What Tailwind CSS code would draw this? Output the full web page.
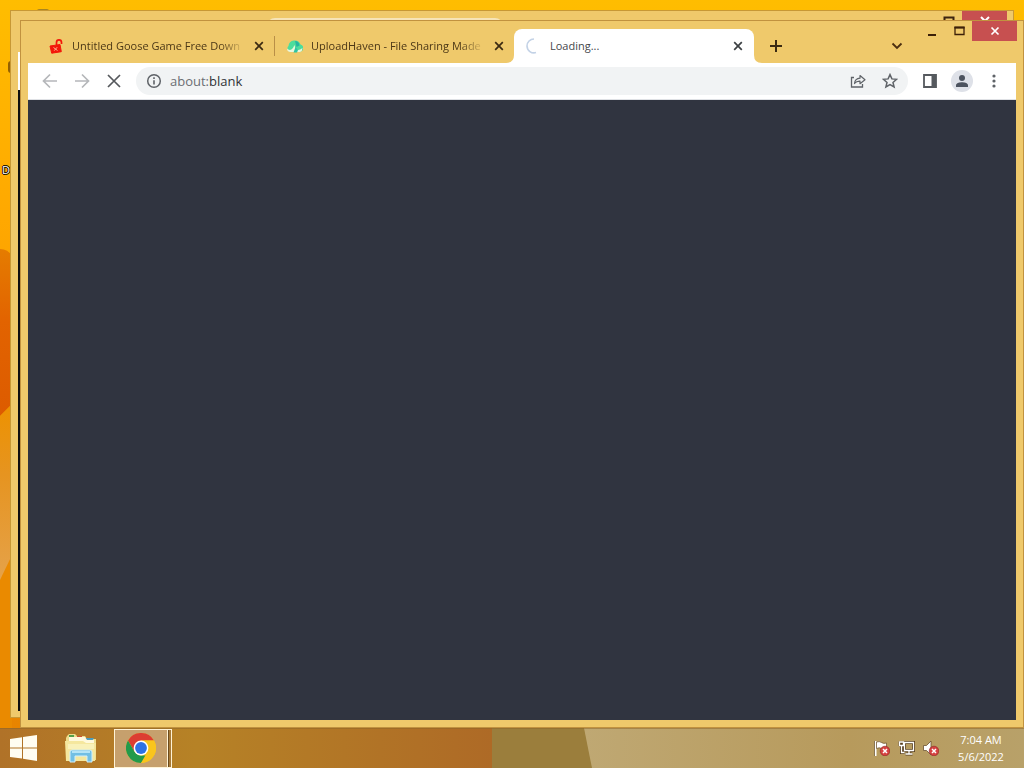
<!DOCTYPE html>
<html lang="en">
<head>
<meta charset="utf-8">
<title>Desktop</title>
<script src="https://cdn.jsdelivr.net/npm/@tailwindcss/browser@4"></script>
</head>
<body class="h-screen overflow-hidden flex flex-col font-['Open_Sans','Noto_Sans',sans-serif] text-[#202124]">

<main class="relative flex-1 bg-linear-to-b from-[#ffbd00] via-[#ffa800] via-30% to-[#e88400]">
  <!-- wallpaper -->
  <svg class="absolute left-0 top-0 h-full w-5" viewBox="0 0 20 728" preserveAspectRatio="none" aria-hidden="true">
    <defs>
      <linearGradient id="w1" x1="0" y1="0" x2="0" y2="1"><stop offset="0" stop-color="#e57c00"/><stop offset=".4" stop-color="#e26300"/><stop offset="1" stop-color="#dc5a00"/></linearGradient>
      <linearGradient id="w2" x1="0" y1="0" x2="0" y2="1"><stop offset="0" stop-color="#ed9200"/><stop offset=".4" stop-color="#e69420"/><stop offset="1" stop-color="#e5a24a"/></linearGradient>
    </defs>
    <path d="M0 249Q8 249 12 256V430H0z" fill="url(#w1)"/>
    <path d="M0 416L12 404V728H0z" fill="#ea8a00"/>
    <path d="M0 416L12 404V555L0 580z" fill="url(#w2)"/>
  </svg>
  <span class="absolute left-0.5 top-[162px] text-[11px] leading-4 text-white [text-shadow:1px_0_#000,-1px_0_#000,0_1px_#000,0_-1px_#000]">D</span>
  <span class="absolute left-[37px] top-[9px] h-[2px] w-3 rounded-t-full bg-[#a88520]"></span>
  <span class="absolute left-2 top-[61px] h-3 w-[3px] rounded-l-full bg-[#946000]"></span>

  <!-- window behind -->
  <section aria-label="Background window" class="absolute left-[10px] top-[10px] right-[10px] bottom-[10px] flex flex-col border border-[#c79835] bg-[#efc96b]">
    <header class="flex h-[41px] shrink-0 items-start">
      <div class="ml-[256px] mt-[7px] h-8 w-[236px] rounded-t-lg bg-[#f6e4b8]"></div>
      <svg class="ml-auto mt-[5px] mr-[7px]" width="12" height="10" viewBox="0 0 12 10"><path d="M1.500 1.500h9v7h-9z" fill="none" stroke="#3c2410" stroke-width="2"/></svg>
      <div class="mr-1.5 flex h-5 w-[45px] items-center justify-center bg-[#c75050]"><svg width="10" height="10" viewBox="0 0 10 10"><path d="M1 1l8 8M9 1l-8 8" stroke="#fff" stroke-width="2"/></svg></div>
    </header>
    <div class="mx-[7px] h-[38px] shrink-0 bg-white"></div>
    <div class="mx-[7px] mb-[6px] flex-1 bg-[#0d0e10]"></div>
  </section>

  <!-- browser window -->
  <section aria-label="Browser" class="absolute left-[20px] top-[20px] right-0 bottom-0 flex flex-col border border-[#c1923f] bg-[#efc96b]">
    <header class="flex h-[42px] shrink-0 items-end pl-[15px]">
      <div class="flex items-end" role="tablist">
        <div class="flex h-[34px] w-[239px] items-center pl-3">
          <svg width="16" height="16" viewBox="0 0 16 16" class="shrink-0"><path d="M2 8l10-1.500 1.300 7.200-9.600 1.500z" fill="#f3170a" stroke="#f3170a" stroke-linejoin="round"/><path d="M8.500 7V4.500C8.500 1 13.500 1 13.500 4.500V6" fill="none" stroke="#f3170a" stroke-width="1.700"/><path d="M5.500 9.500l4 3M9.200 9.200l-3 3.500" stroke="#ffb28c"/></svg>
          <button role="tab" class="ml-2 w-[174px] whitespace-nowrap text-left text-[11px] leading-4 text-[#4b3716] mask-r-from-85% mask-r-to-100%">Untitled Goose Game Free Down</button>
          <button aria-label="Close tab" class="ml-1.5"><svg width="16" height="16" viewBox="0 0 16 16"><path d="M4.200 4.200l7.600 7.600M11.800 4.200l-7.600 7.600" stroke="#3b2a12" stroke-width="1.700"/></svg></button>
          <span class="ml-[7px] h-5 w-px bg-[#b98f47]"></span>
        </div>
        <div class="flex h-[34px] w-[239px] items-center pl-3">
          <svg width="16" height="16" viewBox="0 0 16 16" class="shrink-0"><path d="M3 13.500a3.200 3.200 0 0 1-1.500-5.500A6.200 6.200 0 0 1 13.500 6.500 3.700 3.700 0 0 1 14 13.500z" fill="#4cdd9c"/><path d="M0 10.500q3 3 6-.500l1.500-3 1 4q3 2.500 7-1 0 3-2.500 4H3q-3-.500-3-3.500z" fill="#e9f7dc"/><path d="M6.500 14.500l2-5.500 2.500 3-1 2.500z" fill="#2fc4a3"/><path d="M8 3q4 0 4.500 4.500L9.500 9z" fill="#28b5a0"/></svg>
          <button role="tab" class="ml-2 w-[174px] whitespace-nowrap text-left text-[11px] leading-4 text-[#4b3716] mask-r-from-85% mask-r-to-100%">UploadHaven - File Sharing Made</button>
          <button aria-label="Close tab" class="ml-1.5"><svg width="16" height="16" viewBox="0 0 16 16"><path d="M4.200 4.200l7.600 7.600M11.800 4.200l-7.600 7.600" stroke="#3b2a12" stroke-width="1.700"/></svg></button>
        </div>
        <div class="relative flex h-[34px] w-[240px] items-center rounded-t-lg bg-white pl-3">
          <svg class="absolute -left-2 bottom-0" width="8" height="8" viewBox="0 0 8 8"><path d="M8 0v8H0Q8 8 8 0z" fill="#fff"/></svg>
          <svg class="absolute -right-2 bottom-0" width="8" height="8" viewBox="0 0 8 8"><path d="M0 0v8h8Q0 8 0 0z" fill="#fff"/></svg>
          <svg width="16" height="16" viewBox="0 0 16 16" class="shrink-0"><path d="M8 1A7 7 0 0 0 1 8 7 7 0 0 0 10 14.600" fill="none" stroke="#c3d2e6" stroke-width="1.600"/></svg>
          <button role="tab" aria-selected="true" class="ml-2 w-[174px] text-left text-[11px] leading-4 text-[#45474b]">Loading...</button>
          <button aria-label="Close tab" class="ml-1.5"><svg width="16" height="16" viewBox="0 0 16 16"><path d="M4.200 4.200l7.600 7.600M11.800 4.200l-7.600 7.600" stroke="#3c4043" stroke-width="1.700"/></svg></button>
        </div>
      </div>
      <button aria-label="New tab" class="mb-[9px] ml-[14px]"><svg width="16" height="16" viewBox="0 0 16 16"><path d="M8 2v12M2 8h12" stroke="#3b2a12" stroke-width="2"/></svg></button>
      <button aria-label="Search tabs" class="mb-[9px] ml-auto mr-[23px]"><svg width="16" height="16" viewBox="0 0 16 16"><path d="M3.500 5.500L8 10l4.500-4.500" fill="none" stroke="#4b2e10" stroke-width="1.800"/></svg></button>
      <div class="flex h-5 items-center self-start">
        <button aria-label="Minimize" class="w-[9px]"><svg width="9" height="12" viewBox="0 0 9 12"><path d="M0 10h8" stroke="#3c2008" stroke-width="2"/></svg></button>
        <button aria-label="Maximize" class="ml-[17px] mr-[7px]"><svg width="11" height="12" viewBox="0 0 11 12"><path d="M1 2.500h9v7H1z" fill="none" stroke="#3c2008" stroke-width="1.300"/><path d="M.400 2.500h10.200" stroke="#3c2008" stroke-width="2"/></svg></button>
        <button aria-label="Close" class="mr-1.5 flex h-5 w-[45px] items-center justify-center bg-[#c75050]"><svg width="10" height="10" viewBox="0 0 10 10"><path d="M1.500 1.500l7 7M8.500 1.500l-7 7" stroke="#fff" stroke-width="1.700"/></svg></button>
      </div>
    </header>

    <div class="mr-[7px] ml-[7px] flex h-[37px] shrink-0 items-center border-b border-[#dfe1e5] bg-white px-[14px]">
      <button aria-label="Back"><svg width="16" height="16" viewBox="0 0 16 16"><path d="M15 8H2M8 1.500L1.500 8 8 14.500" fill="none" stroke="#b5b7ba" stroke-width="1.700"/></svg></button>
      <button aria-label="Forward" class="ml-4"><svg width="16" height="16" viewBox="0 0 16 16"><path d="M1 8h13M8 1.500L14.500 8 8 14.500" fill="none" stroke="#b5b7ba" stroke-width="1.700"/></svg></button>
      <button aria-label="Stop" class="ml-4"><svg width="16" height="16" viewBox="0 0 16 16"><path d="M2 2l12 12M14 2L2 14" stroke="#55585c" stroke-width="1.700"/></svg></button>
      <div class="ml-[14px] flex h-7 flex-1 items-center rounded-full bg-[#f1f3f4] px-[10px]">
        <button aria-label="Site information"><svg width="16" height="16" viewBox="0 0 16 16"><circle cx="8" cy="8" r="6.300" fill="none" stroke="#5f6368" stroke-width="1.500"/><path d="M8 7.200v4.200M8 4.300v1.700" stroke="#5f6368" stroke-width="1.600"/></svg></button>
        <div class="relative ml-2 flex-1 text-[13px] leading-5">
          <input aria-label="Address" value="about:blank" class="w-full bg-transparent text-transparent outline-none">
          <span aria-hidden="true" class="pointer-events-none absolute left-0 top-0 text-[#303236]"><span class="text-[#6b6e73]">about:</span>blank</span>
        </div>
        <button aria-label="Share"><svg width="16" height="16" viewBox="0 0 16 16"><path d="M4 4.500H1.500V14h11v-3" fill="none" stroke="#5f6368" stroke-width="1.300"/><path d="M4.500 10.500Q5 5.500 10 5.200V2.500L15 6.700l-5 4V8.200Q6.500 8 4.500 10.500z" fill="none" stroke="#5f6368" stroke-width="1.200" stroke-linejoin="round"/></svg></button>
        <button aria-label="Bookmark" class="ml-4"><svg width="16" height="16" viewBox="0 0 16 16"><path d="M8 1.600l1.900 4.300 4.700.4-3.600 3.100 1.100 4.600L8 11.600 3.900 14 5 9.400 1.400 6.300l4.700-.4z" fill="none" stroke="#5f6368" stroke-width="1.500"/></svg></button>
      </div>
      <button aria-label="Side panel" class="ml-[14px]"><svg width="16" height="16" viewBox="0 0 16 16"><path d="M2 2h12v12H2z" fill="none" stroke="#55595e" stroke-width="1.800"/><path d="M9.500 2H14v12H9.500z" fill="#55595e"/></svg></button>
      <button aria-label="Profile" class="ml-[13px]"><svg width="22" height="22" viewBox="0 0 22 22"><circle cx="11" cy="11" r="11" fill="#dee1e8"/><circle cx="11" cy="8" r="3" fill="#4c535f"/><path d="M5 17v-1.500C5 13 8.500 12.300 11 12.300s6 .700 6 3.200V17z" fill="#4c535f"/></svg></button>
      <button aria-label="Menu" class="ml-[13px]"><svg width="16" height="16" viewBox="0 0 16 16" fill="#5f6368"><circle cx="8" cy="3" r="1.600"/><circle cx="8" cy="8" r="1.600"/><circle cx="8" cy="13" r="1.600"/></svg></button>
    </div>
    <div class="mr-[7px] mb-[7px] ml-[7px] flex-1 bg-[#303440]"></div>
  </section>
</main>

<footer class="relative flex h-10 shrink-0 items-center bg-[#b37828]">
  <svg class="absolute inset-0 h-full w-full" viewBox="0 0 1024 40" preserveAspectRatio="none" aria-hidden="true">
    <defs>
      <linearGradient id="t1"><stop offset="0" stop-color="#b07228"/><stop offset=".4" stop-color="#b68226"/><stop offset="1" stop-color="#ae6a26"/></linearGradient>
      <linearGradient id="t2"><stop offset="0" stop-color="#bfa873"/><stop offset=".6" stop-color="#b79a5c"/><stop offset="1" stop-color="#b8a169"/></linearGradient>
    </defs>
    <path d="M0 0h492v40H0z" fill="url(#t1)"/>
    <path d="M492 0h105v40H492z" fill="#9b7e3c"/>
    <path d="M584 0h440v40H592z" fill="url(#t2)"/>
    <path d="M0 0h1024v1H0z" fill="#8b6426" opacity=".5"/>
  </svg>
  <button aria-label="Start" class="relative ml-[10px]"><svg width="28" height="26" viewBox="0 0 28 26" fill="#fffdf2"><path d="M0 4l12-1.700V12.500H0zM13 2.100L27 0v12.500H13zM0 13.500h12v10L0 22zM13 13.500h14V26l-14-2.200z"/></svg></button>
  <button aria-label="File Explorer" class="relative ml-[26px]"><svg width="34" height="30" viewBox="0 0 34 30"><path d="M3 3l2-2h6l2 2h8l2 3h9v21H2V5z" fill="#eddc8c"/><path d="M5 2h5v2H5z" fill="#55a04a"/><path d="M13 3h5v2h-5z" fill="#cf5136"/><path d="M21 5h9l-2 3h-5z" fill="#4c9dbd"/><path d="M5 4h16l2 3h7v3H5z" fill="#fff9dc"/><path d="M1 8h18l3 2h10l-1 18H2z" fill="#f5e79e"/><path d="M4 11h26v5H4z" fill="#f9f1b9"/><path d="M6 29V19q0-2 2-2h18q2 0 2 2v10h-5v-6H11v6z" fill="#72bfe4" stroke="#d2f0fa"/><path d="M8 19h18" stroke="#b5e4f6" stroke-width="2"/></svg></button>
  <button aria-label="Google Chrome" class="relative ml-4 flex h-[39px] w-[58px] items-center border border-[#fff3d6] bg-[#c6a06d]">
    <span class="flex h-full w-[53px] items-center justify-center border-r border-[#fff3d6]"><svg width="30" height="30" viewBox="0 0 30 30"><circle cx="15" cy="15" r="15" fill="#f9c51d"/><path d="M2 7.500A15 15 0 0 1 28 7.500H15L8.500 18.700z" fill="#dc3d32"/><path d="M2 7.500l6.500 11.300Q11 22.500 15 22.500h6.500L15 30A15 15 0 0 1 2 7.500z" fill="#239a4b"/><path d="M21.500 18.700L15 30A15 15 0 0 0 28 7.500H15q7.500 0 6.500 11.200z" fill="#f9c51d"/><circle cx="15" cy="15" r="7.400" fill="#fff"/><circle cx="15" cy="15" r="5.900" fill="#2f72e5"/></svg></span>
    <span class="h-full w-px bg-[#6b4a1c]"></span>
    <span class="h-full flex-1 bg-[#a77a38]"></span>
  </button>
  <div class="relative ml-auto mr-4 flex items-center">
    <button aria-label="Action Center"><svg width="16" height="16" viewBox="0 0 16 16"><path d="M1.500 1v15" stroke="#fff" stroke-width="2"/><path d="M2.500 2q3-1 5 .500t5 .500v6q-3 1-5-.500t-5 0z" fill="#fff" stroke="#674d2b" stroke-width=".700"/><path d="M.400 1v15" stroke="#59401f" stroke-width=".700"/><circle cx="11" cy="11" r="4.800" fill="#d64242" stroke="#8f2424" stroke-width=".600"/><path d="M9 9l4 4M13 9l-4 4" stroke="#fff" stroke-width="1.500"/></svg></button>
    <button aria-label="Network" class="ml-2"><svg width="17" height="16" viewBox="0 0 17 16"><path d="M6.500 2.500h9v8h-9zM11 11v3M7.500 14h7M3.500 6v6.500h3" fill="none" stroke="#59401f" stroke-width="3"/><path d="M1 1.500h5V6H1z" fill="#59401f" stroke="#59401f"/><path d="M6.500 2.500h9v8h-9zM11 11v3M7.500 14h7M3.500 6v6.500h3M1.500 2h4v3.500h-4z" fill="none" stroke="#fff" stroke-width="1.300"/></svg></button>
    <button aria-label="Volume muted" class="ml-2"><svg width="16" height="16" viewBox="0 0 16 16"><path d="M.500 5.500h3L8 1v14l-4.500-4.500h-3z" fill="#fff" stroke="#6b5230" stroke-width=".800"/><circle cx="11" cy="11" r="4.800" fill="#d64242" stroke="#8f2424" stroke-width=".600"/><path d="M9 9l4 4M13 9l-4 4" stroke="#fff" stroke-width="1.500"/></svg></button>
    <button class="ml-[15px] w-[54px] whitespace-nowrap text-center text-[11px] leading-[17px] text-white"><time class="flex flex-col items-center"><span>7:04 AM</span><span>5/6/2022</span></time></button>
  </div>
</footer>
</body>
</html>
